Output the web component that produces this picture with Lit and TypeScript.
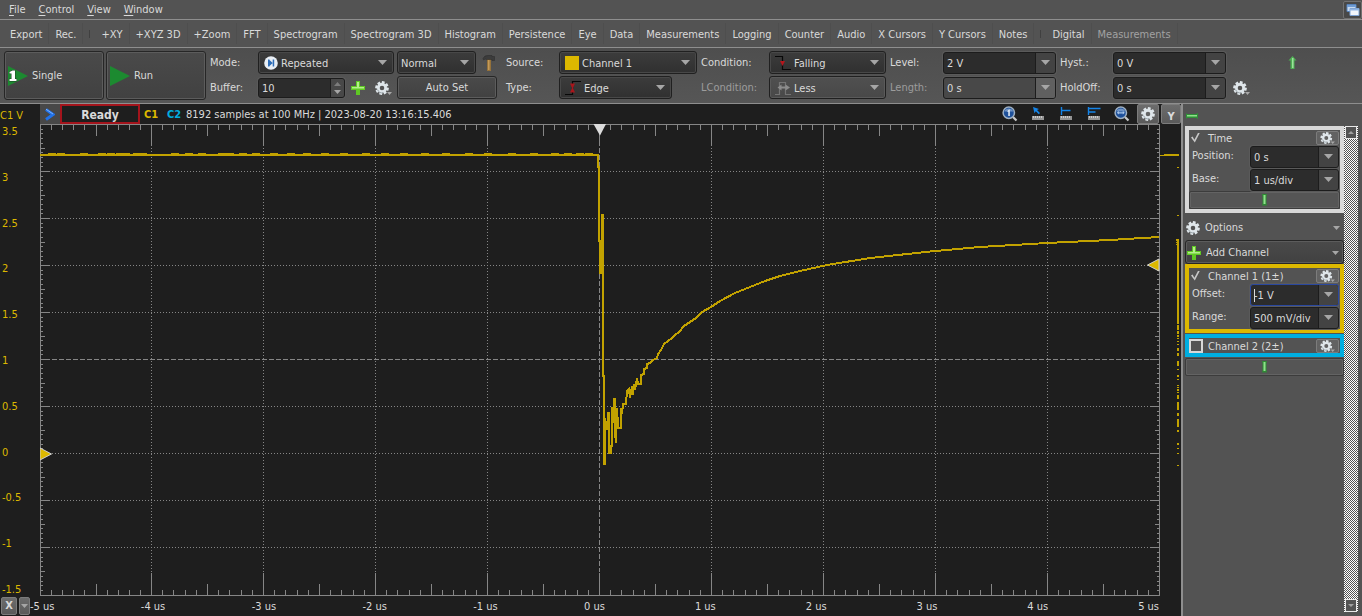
import { LitElement, html, css, svg, nothing, TemplateResult } from "lit";
import { customElement } from "lit/decorators.js";

const gearTeeth = [0, 45, 90, 135, 180, 225, 270, 315];

const gearIcon = (size = 14, drop = false) => html`
  <svg class="icon" width=${drop ? size + 4 : size} height=${size} viewBox="0 0 ${drop ? 18 : 14} 14" aria-hidden="true">
    ${gearTeeth.map((a) => svg`<rect x="5.5" y="0.2" width="3" height="3.6" rx=".4" fill="#dfe6ea" transform="rotate(${a + 12} 7 7)"/>`)}
    <circle cx="7" cy="7" r="3.6" fill="none" stroke="#dfe6ea" stroke-width="2.6"/>
    <path d="M2.6 8.6A4.8 4.8 0 0 0 8.4 11.6" fill="none" stroke="#9aa4aa" stroke-width="1"/>
    ${drop ? svg`<path d="M12 11h5l-2.5 3z" fill="#a8a8a8"/>` : nothing}
  </svg>`;

const plusIcon = html`
  <svg class="icon" width="14" height="14" viewBox="0 0 14 14" aria-hidden="true">
    <path d="M5 0h4v5h5v4h-5v5h-4v-5h-5v-4h5z" fill="#5fc824"/>
    <path d="M6 1h2v5h5v1.400h-12v-1.400h5z" fill="#b4f08a"/>
  </svg>`;

const caret = html`
  <svg class="caret" width="9" height="5" viewBox="0 0 9 5" aria-hidden="true"><path d="M0 0h9l-4.500 5z" fill="#a6a6a6"/></svg>`;

const smallCaret = html`
  <svg class="caret" width="7" height="4" viewBox="0 0 7 4" aria-hidden="true"><path d="M0 0h7l-3.500 4z" fill="#a6a6a6"/></svg>`;

const pinIcon = html`
  <svg class="icon" width="5" height="12" viewBox="0 0 5 12" aria-hidden="true">
    <path d="M0 0h5l-.5 3v6l.5 2.500h-5l.5-2.500v-6z" fill="#2f8a35"/><path d="M1.500 1h2v9h-2z" fill="#8fe08a"/>
  </svg>`;

const playIcon = (one: boolean) => html`
  <svg class="icon" width="20" height="20" viewBox="0 0 20 20" aria-hidden="true">
    <path d="M0 0L20 10L0 20z" fill="#1c8a30"/>
    ${one
      ? svg`<path d="M1.500 7.500v-1.500l3-1.500h2.500v8.500h1.500v2h-7v-2h2v-5.500z" fill="#fff" stroke="#1d3d22" stroke-width="1" paint-order="stroke"/>`
      : nothing}
  </svg>`;

const repeatIcon = html`
  <svg class="icon" width="14" height="14" viewBox="0 0 14 14" aria-hidden="true">
    <circle cx="7" cy="7" r="6.800" fill="#e8eef4"/>
    <path d="M4 3.500h1.500v7h-1.500zM5.500 4l3.200 3-3.200 3zM8.700 3.500h1.500v7h-1.500z" fill="#2d6db8"/>
  </svg>`;

const hammerIcon = html`
  <svg class="icon" width="14" height="16" viewBox="0 0 14 16" aria-hidden="true">
    <path d="M5 4h4v12h-4z" fill="#94713a"/><path d="M6 5h1.500v10h-1.500z" fill="#c49a58"/>
    <path d="M1 3.500Q2.500 0 6 .5h4v1h2.500v4h-2.500v-1h-5Q3 3.500 1.500 5z" fill="#3c3c3c" stroke="#2a2a2a" stroke-width=".5"/>
  </svg>`;

const swatchIcon = html`
  <svg class="icon" width="14" height="14" viewBox="0 0 14 14" aria-hidden="true"><path d="M0 0h14v14h-14z" fill="#dcb800"/></svg>`;

const edgeIcon = html`
  <svg class="icon" width="16" height="16" viewBox="0 0 16 16" aria-hidden="true">
    <path d="M0 14.500h7.500v-13h8.500" fill="none" stroke="#080808" stroke-width="1.200"/>
    <path d="M5 3.500h5l-2 4.500 2 4.500h-5l2-4.500z" fill="#a8161c"/>
  </svg>`;

const fallingIcon = html`
  <svg class="icon" width="16" height="16" viewBox="0 0 16 16" aria-hidden="true">
    <path d="M0 1.500h7.500v13h8.500" fill="none" stroke="#080808" stroke-width="1.200"/>
    <path d="M5 6h5l-2.500 5z" fill="#b4161c"/>
  </svg>`;

const lessIcon = html`
  <svg class="icon" width="16" height="16" viewBox="0 0 16 16" aria-hidden="true">
    <path d="M0 14.500h4.500v-12h6v12h5.500" fill="none" stroke="#747474" stroke-width="1.200"/>
    <path d="M2.500 7.500l4-3v2h4v-2l4.500 3-4.500 3v-2h-4v2z" fill="#8c8c8c"/>
  </svg>`;

const windowsIcon = html`
  <svg class="icon" width="14" height="12" viewBox="0 0 14 12" aria-hidden="true">
    <path d="M1 .5h9v7h-9z" fill="#c8daf0" stroke="#5580b8"/><path d="M1 1h9v2h-9z" fill="#6f9cd4"/>
    <path d="M4 4.500h9v7h-9z" fill="#f2f6fc" stroke="#7fa4d4"/><path d="M4 5h9v1.500h-9z" fill="#8fb4e4"/>
  </svg>`;

const upArrow = html`
  <svg class="icon" width="9" height="13" viewBox="0 0 9 13" aria-hidden="true">
    <path d="M4.500 0L8.500 4.500h-2v8.500h-4v-8.500h-2z" fill="#4fae54"/><path d="M4 2h1.500v10h-1.500z" fill="#9be29a"/>
  </svg>`;

const dockArrow = html`
  <svg class="icon" width="12" height="6" viewBox="0 0 12 6" aria-hidden="true">
    <path d="M0 0l1 1h9l2-1v6l-2-1h-9l-1 1z" fill="#2f8f38"/><path d="M1 2h10v1.500h-10z" fill="#8fe08a"/>
  </svg>`;

const blueChevron = html`
  <svg class="icon" width="10" height="13" viewBox="0 0 10 13" aria-hidden="true">
    <path d="M1 1.500L8 6.500L1 11.500" fill="none" stroke="#2272e8" stroke-width="3"/>
    <path d="M1 1.200L8 6" fill="none" stroke="#7cb4ff" stroke-width="1"/>
  </svg>`;

const lens = (one: boolean) => html`
  <svg class="icon" width="16" height="16" viewBox="0 0 16 16" aria-hidden="true">
    <path d="M11 11l3.500 3.500" stroke="#c8c8c8" stroke-width="2.200"/>
    <circle cx="6.800" cy="6.800" r="5.700" fill="#1e509a" stroke="#9fb0c2" stroke-width="1.500"/>
    <path d="M2.400 5.500a4.800 4.800 0 0 1 8.800 0z" fill="#6f93c4"/>
    ${one
      ? svg`<path d="M5.500 5l1.500-1.500h.8v6.500h-1.500v-4.500l-.8.5z" fill="#e8f0fa"/>`
      : svg`<path d="M2.800 6.800l2-1.800v1.200h4v-1.200l2 1.800-2 1.800v-1.200h-4v1.200z" fill="#a9c6ea"/>`}
  </svg>`;

const ruler = (kind: "cursor" | "single" | "double") => html`
  <svg class="icon" width="16" height="16" viewBox="0 0 16 16" aria-hidden="true">
    <path d="M2 10h12v4h-12z" fill="#949494"/><path d="M3.500 10v2M5.500 10v2M7.500 10v2M9.500 10v2M11.500 10v2" stroke="#d8d8d8" stroke-width=".8"/>
    ${kind === "cursor"
      ? svg`<path d="M3 1l6 2-2 1 3 3-1.200 1.200-3-3-1.300 2z" fill="#1484e8"/>`
      : kind === "single"
        ? svg`<path d="M3.500 1v8M3.500 4.500h9" stroke="#1484e8" stroke-width="1.400" fill="none"/>`
        : svg`<path d="M2.500 1v8M2.500 2.500h12M2.500 6h7" stroke="#1484e8" stroke-width="1.400" fill="none"/>`}
  </svg>`;

/** Tick ladder: short, half and full ticks along an axis between grid lines. */
function tickPath(edges: number[], draw: (pos: number, rank: number) => string): string {
  let d = "";
  for (let i = 0; i < edges.length - 1; i++) {
    for (let k = 0; k < 10; k++) {
      if (i === 0 && k === 0) continue;
      const p = Math.round(edges[i] + ((edges[i + 1] - edges[i]) * k) / 10) + 0.5;
      d += draw(p, k === 0 ? 2 : k === 5 ? 1 : 0);
    }
  }
  return d;
}

const columns = [0, 111, 223, 335, 447, 559, 671, 783, 895, 1007, 1119];
const rows = [0, 47, 94, 141, 188, 235, 282, 329, 376, 423, 471];

const trace: [number, number][] = [
  [0, 31], [558, 31], [558, 43], [559, 43], [559, 117], [560, 117], [560, 149], [562, 149], [562, 91],
  [563, 91], [563, 252], [564, 252], [564, 340], [565, 340], [565, 294], [567, 306], [568, 289], [569, 289],
  [569, 329], [571, 329], [571, 322], [572, 322], [572, 283], [574, 299], [574, 275], [575, 275], [575, 308],
  [576, 319], [577, 284], [578, 302], [578, 304], [581, 304], [581, 284], [582, 290], [583, 280], [586, 280],
  [587, 267], [589, 265], [590, 274], [592, 262], [593, 271], [594, 260], [595, 266], [597, 254], [598, 260],
  [601, 260], [601, 251], [604, 250], [604, 245], [607, 244], [607, 240], [610, 239], [613, 236], [617, 234],
  [618, 230], [621, 226], [624, 220], [628, 217], [632, 214], [635, 211], [639, 208], [644, 202], [650, 198],
  [656, 194], [662, 188], [671, 183], [680, 177], [695, 169], [710, 163], [725, 157], [740, 152], [760, 147],
  [787, 141], [830, 134], [895, 127], [940, 123], [1007, 119], [1070, 116], [1119, 113],
];

const ripples = [8, 17, 40, 58, 67, 76, 82, 93, 99, 131, 145, 158, 178, 186, 199, 212, 230, 247, 263, 281, 300, 322, 341, 360, 381, 402, 425, 444, 468, 490, 511, 524, 536, 545];

@customElement("scope-plot")
export class ScopePlot extends LitElement {
  static styles = css`
    :host { display: block; position: relative; min-width: 0; min-height: 0; }
    .canvas { position: absolute; inset: 0; width: 100%; height: 100%; display: block; }
  `;

  render() {
    const top = tickPath(columns, (x, r) => `M${x} 0v${[6, 12, 22][r]}M${x} 472v${-[6, 12, 23][r]}`);
    const side = tickPath(rows, (y, r) => `M0 ${y}h${[3, 5, 10][r]}M1120 ${y}h${-[3, 5, 10][r]}`);
    return html`
      <svg class="canvas" viewBox="0 0 1120 472" preserveAspectRatio="none" role="img" aria-label="Channel 1 waveform">
        <g fill="none" stroke="#868686" shape-rendering="crispEdges">
          ${columns.slice(1, -1).map((x) => svg`<path d="M${x + 0.5} 24V448" stroke-dasharray=${x === 559 ? "5 2" : "1 2"}/>`)}
          ${rows.slice(1, -1).map((y) => svg`<path d="M12 ${y + 0.5}H1110" stroke-dasharray=${y === 235 ? "5 2" : "1 2"}/>`)}
          <path d="M.5 .5H1119.5V471.5H.5z"/>
          <path d=${top}/>
          <path d=${side}/>
        </g>
        <polyline points=${trace.map((p) => p.join(",")).join(" ")} fill="none" stroke="#c2a200" stroke-width="2" shape-rendering="crispEdges"/>
        <path d=${ripples.map((x) => `M${x} 29.5h8`).join("")} stroke="#c2a200" shape-rendering="crispEdges"/>
        <path d="M553.500 0h12.500l-6 11.500z" fill="#dcdcdc"/>
        <path d="M0 324l11.500 6-11.500 6z" fill="#dcb800" stroke="#cfcfcf"/>
        <path d="M1119 135l-11.500 6 11.500 6z" fill="#dcb800" stroke="#cfcfcf"/>
      </svg>`;
  }
}

@customElement("scope-overview")
export class ScopeOverview extends LitElement {
  static styles = css`
    :host { display: block; position: relative; min-width: 0; }
    .canvas { position: absolute; inset: 0; width: 100%; height: 100%; display: block; }
  `;

  render() {
    const dashes: [number, number][] = [
      [43, 1], [91, 1], [115, 76], [191, 9], [201, 5], [207, 3], [211, 2], [214, 1], [217, 1], [220, 1], [224, 3],
      [229, 3], [237, 5], [245, 1], [251, 2], [255, 1], [261, 1], [263, 1], [265, 2], [268, 1], [271, 4], [278, 8],
      [289, 3], [295, 8], [306, 2], [319, 2], [324, 1], [329, 1], [341, 1],
    ];
    return html`
      <svg class="canvas" viewBox="0 0 21 472" preserveAspectRatio="none" aria-hidden="true">
        <g fill="#c2a200" shape-rendering="crispEdges">
          <path d="M0 31h19v1h-19zM4 30h15v1h-15z"/>
          <path d="M16 115h1v2h-1zM16 118h1v1h-1zM16 120h1v1h-1z"/>
          ${dashes.map(([y, h]) => svg`<rect x="17" y=${y} width="2" height=${h}/>`)}
        </g>
      </svg>`;
  }
}

@customElement("app-root")
export class AppRoot extends LitElement {
  static styles = css`
    :host {
      display: flex; flex-direction: column; height: 100vh; overflow: hidden;
      background: #535353; color: #dadada;
      font: 11px/14px "DejaVu Sans Condensed", Tahoma, "DejaVu Sans", sans-serif;
    }
    * { box-sizing: border-box; }
    button, input, select { font: inherit; color: inherit; margin: 0; padding: 0; border: 0; background: none; outline: none; border-radius: 0; }
    select { appearance: none; opacity: 1; }
    select:disabled, input:disabled { color: #dadada; opacity: 1; }
    .icon, .caret { display: block; flex: none; }

    .menubar { display: flex; align-items: center; height: 20px; border-bottom: 1px solid #8e8e8e; flex: none; padding: 0 0 0 5px; }
    .menu { padding: 0 4px; margin-right: 5px; }
    .menu u { text-underline-offset: 2px; }
    .windows { margin-left: auto; width: 19px; height: 18px; display: grid; place-items: center; border: 1px solid #717171; border-radius: 2px; background: #484848; }

    .views { display: flex; align-items: center; height: 28px; border-bottom: 1px solid #8e8e8e; flex: none; padding: 0 4px; }
    .view { height: 21px; padding: 2px 6px 0; border-right: 1px solid #4e4e4e; white-space: nowrap; }
    .view:disabled { color: #a2a2a2; }
    .rule { width: 1px; height: 8px; margin: 0 5px 0 6px; background: #404040; }

    .controls { display: flex; height: 56px; border-bottom: 1px solid #8e8e8e; flex: none; padding: 3px 4px; background: linear-gradient(#4e4e4e, #565656); }
    .big { width: 100px; height: 49px; margin-right: 2px; display: flex; align-items: center; gap: 4px; padding-left: 3px; }
    .raised { border: 1px solid #262626; border-radius: 3px; background: linear-gradient(#4a4a4a, #414141); box-shadow: inset 0 0 0 1px #5c5c5c; }
    .group { display: grid; grid-template: 23px 23px / auto 1fr; row-gap: 2px; align-items: center; margin-left: 4px; }
    .first { margin-left: 2px; }
    .second { margin-left: 9px; }
    .label { width: 53px; padding-top: 1px; }
    .narrow { width: 48px; padding-top: 1px; }
    .wide { width: 68px; padding-top: 1px; }
    .off { color: #9c9c9c; }
    .cells { display: flex; align-items: center; }

    .combo { display: flex; align-items: center; height: 23px; width: 113px; padding: 0 6px 0 5px; border: 1px solid #202020; border-radius: 3px; background: linear-gradient(#3c3c3c, #303030); box-shadow: inset 0 0 0 1px #484848; }
    .combo select { flex: 1; min-width: 0; height: 21px; padding: 2px 0 0 3px; }
    .mode { width: 136px; }
    .normal { width: 79px; margin: 0 6px 0 3px; padding-left: 0; }
    .source { width: 138px; }
    .condition { width: 117px; }
    .dim { background: linear-gradient(#505050, #484848); box-shadow: inset 0 0 0 1px #5a5a5a; }

    .entry { display: flex; height: 22px; width: 113px; border: 1px solid #1c1c1c; border-radius: 3px; background: #2c2c2c; box-shadow: 0 0 0 1px #5a5a5a; overflow: hidden; }
    .entry input { flex: 1; min-width: 0; padding: 2px 0 0 3px; }
    .entry .drop { width: 20px; display: grid; place-items: center; border-left: 1px solid #1c1c1c; background: #434343; flex: none; }
    .entry.dim { background: #484848; }
    .entry.dim .drop { background: #606060; }
    .focus { border-color: #2a48a0; }
    .focus input { background: linear-gradient(#dadada, #dadada) 3px 4px / 1px 13px no-repeat; }
    .spin { width: 87px; margin-right: 6px; height: 20px; }
    .spin .steps { width: 14px; display: grid; place-items: center; align-content: center; gap: 4px; border-left: 1px solid #1c1c1c; background: #484848; }
    .plain { display: grid; place-items: center; width: 14px; height: 20px; }
    .gear { width: 18px; margin: 0 4px 0 10px; }
    .auto { width: 100px; height: 23px; padding-top: 1px; }
    .hold { align-self: flex-end; margin: 0 0 2px 7px; width: 18px; }
    .upper { margin: 1px 0 0 37px; width: 9px; }

    .main { flex: 1; min-height: 0; display: flex; }
    .scope { flex: 1; min-width: 0; display: grid; grid-template: 20px 1fr 20px / 40px 1fr 21px; background: #1e1e1e; }
    .unit { color: #dcb800; line-height: 24px; }
    .bar { grid-column: 2 / 4; display: flex; align-items: center; white-space: nowrap; line-height: 24px; }
    .expand { width: 20px; height: 20px; display: grid; place-items: center; background: #484848; }
    .ready { width: 80px; height: 20px; border: 2px solid #a4141c; text-align: center; font-weight: bold; font-size: 12px; line-height: 18px; }
    .tag { font-weight: bold; margin-left: 4px; width: 19px; padding-top: 2px; }
    .sample { padding-top: 2px; }
    .c1 { color: #dcb800; }
    .c2 { color: #00aee0; }
    .tools { margin-left: auto; display: flex; align-items: center; gap: 12px; }
    .tool { display: grid; place-items: center; height: 20px; width: 16px; }
    .key { display: grid; place-items: center; border: 1px solid #7c7c7c; border-radius: 2px; background: linear-gradient(#6c6c6c, #5a5a5a); font-weight: bold; height: 20px; }
    .setup { width: 22px; margin: 0 2px 0 7px; }
    .ykey { width: 20px; }
    .ylabels { display: flex; flex-direction: column; justify-content: space-between; padding: 1px 0 0 2px; margin-bottom: -1px; color: #dcb800; }
    .foot { grid-column: 1 / 4; display: flex; padding: 1px 22px 0 1px; }
    .xkey { width: 16px; height: 18px; margin-right: 2px; }
    .xdrop { width: 11px; height: 18px; }
    .xlabels { flex: 1; display: grid; grid-template-columns: repeat(10, 1fr) auto; line-height: 20px; white-space: nowrap; }

    .dock { width: 181px; flex: none; border-left: 2px solid #8e8e8e; padding: 0 4px 0 2px; display: flex; flex-direction: column; min-height: 0; }
    .head { height: 22px; display: flex; align-items: center; padding: 2px 0 0 1px; flex: none; }
    .body { flex: 1; min-height: 0; display: flex; }
    .list { flex: 1; min-width: 0; display: flex; flex-direction: column; }
    .box { border: 4px solid #d8d8d8; margin-bottom: 1px; }
    .box.one { border-color: #dcb800; }
    .box.two { border-color: #00aee0; }
    .title { display: flex; align-items: center; height: 15px; gap: 5px; padding-right: 1px; }
    .title label { flex: 1; padding-top: 3px; }
    .title input { appearance: none; width: 14px; height: 14px; flex: none; border: 2px solid #d8d8d8; }
    .title input:checked { border: 0; width: 10px; height: 10px; margin: 0 2px; background: #c8c8c8; clip-path: polygon(0 50%, 16% 40%, 34% 72%, 72% 0, 90% 0, 38% 100%); }
    .mini { width: 23px; height: 14px; display: grid; place-items: center; border: 1px solid #7c7c7c; border-radius: 2px; background: #626262; }
    .field { display: flex; align-items: center; height: 23px; padding: 0 1px 0 3px; }
    .field label { width: 58px; padding-bottom: 1px; }
    .field .entry { flex: 1; }
    .strip { display: grid; place-items: center; width: 100%; height: 18px; border: 1px solid #3c3c3c; border-radius: 2px; background: #555; box-shadow: inset 0 0 0 1px #636363; }
    .row { display: flex; align-items: center; gap: 5px; height: 24px; padding: 2px 4px 0 1px; text-align: left; }
    .row .caret { margin-left: auto; }
    .options { margin: 1px 0; }
    .scroll { width: 14px; flex: none; display: flex; flex-direction: column; margin-bottom: 4px; background: repeating-conic-gradient(#fff 0 25%, #535353 0 50%) 0 0 / 2px 2px; }
    .scroll button { height: 13px; margin: 0 1px; display: grid; place-items: center; border: 1px solid #e8e8e8; background: #535353; flex: none; }
    .track { flex: 1; }
  `;

  private combo(id: string, value: string, cls = "", icon?: TemplateResult, disabled = false) {
    return html`<span class="combo ${cls}">${icon ?? nothing}<select id=${id} aria-label=${value} ?disabled=${disabled}><option>${value}</option></select>${caret}</span>`;
  }

  private entry(id: string, value: string, cls = "", disabled = false) {
    return html`<span class="entry ${cls}"><input id=${id} type="text" .value=${value} ?disabled=${disabled}><button class="drop" aria-label="Choose value" ?disabled=${disabled}>${caret}</button></span>`;
  }

  private view(name: string, disabled = false) {
    return html`<button class="view" ?disabled=${disabled}>${name}</button>`;
  }

  render() {
    return html`
      <nav class="menubar">
        <button class="menu"><u>F</u>ile</button><button class="menu"><u>C</u>ontrol</button><button class="menu"><u>V</u>iew</button><button class="menu"><u>W</u>indow</button>
        <button class="windows" aria-label="Windows">${windowsIcon}</button>
      </nav>
      <div class="views">
        ${["Export", "Rec."].map((n) => this.view(n))}
        <span class="rule"></span>
        ${["+XY", "+XYZ 3D", "+Zoom", "FFT", "Spectrogram", "Spectrogram 3D", "Histogram", "Persistence", "Eye", "Data", "Measurements", "Logging", "Counter", "Audio", "X Cursors", "Y Cursors", "Notes"].map((n) => this.view(n))}
        <span class="rule"></span>
        ${this.view("Digital")}${this.view("Measurements", true)}
      </div>
      <div class="controls">
        <button class="big raised">${playIcon(true)}Single</button>
        <button class="big raised">${playIcon(false)}Run</button>
        <div class="group first">
          <label class="narrow" for="mode">Mode:</label>
          <div class="cells">${this.combo("mode", "Repeated", "mode", repeatIcon)}${this.combo("run-mode", "Normal", "normal")}${hammerIcon}</div>
          <label class="narrow" for="buffer">Buffer:</label>
          <div class="cells">
            <span class="entry spin"><input id="buffer" type="text" .value=${"10"}><span class="steps">
              <svg class="icon" width="7" height="4" viewBox="0 0 7 4"><path d="M0 4h7l-3.500-4z" fill="#7c7c7c"/></svg>${smallCaret}</span></span>
            <button class="plain" aria-label="Add buffer">${plusIcon}</button>
            <button class="plain gear" aria-label="Buffer options">${gearIcon(14, true)}</button>
            <button class="auto raised">Auto Set</button>
          </div>
        </div>
        <div class="group second">
          <label class="label" for="source">Source:</label>${this.combo("source", "Channel 1", "source", swatchIcon)}
          <label class="label" for="type">Type:</label>${this.combo("type", "Edge", "", edgeIcon)}
        </div>
        <div class="group">
          <label class="wide" for="condition">Condition:</label>${this.combo("condition", "Falling", "condition", fallingIcon)}
          <label class="wide off" for="lcondition">LCondition:</label>${this.combo("lcondition", "Less", "condition dim", lessIcon, true)}
        </div>
        <div class="group">
          <label class="label" for="level">Level:</label>${this.entry("level", "2 V")}
          <label class="label off" for="length">Length:</label>${this.entry("length", "0 s", "dim", true)}
        </div>
        <div class="group">
          <label class="label" for="hyst">Hyst.:</label>${this.entry("hyst", "0 V")}
          <label class="label" for="holdoff">HoldOff:</label>${this.entry("holdoff", "0 s")}
        </div>
        <button class="plain hold" aria-label="Trigger options">${gearIcon(14, true)}</button>
        <button class="plain upper" aria-label="Collapse">${upArrow}</button>
      </div>
      <div class="main">
        <section class="scope">
          <div class="unit">C1 V</div>
          <div class="bar">
            <button class="expand" aria-label="Expand">${blueChevron}</button>
            <div class="ready">Ready</div>
            <span class="tag c1">C1</span><span class="tag c2">C2</span>
            <span class="sample">8192 samples at 100 MHz | 2023-08-20 13:16:15.406</span>
            <div class="tools">
              <button class="tool" aria-label="Zoom 1">${lens(true)}</button>
              <button class="tool" aria-label="Cursor">${ruler("cursor")}</button>
              <button class="tool" aria-label="Ruler">${ruler("single")}</button>
              <button class="tool" aria-label="Double ruler">${ruler("double")}</button>
              <button class="tool" aria-label="Zoom fit">${lens(false)}</button>
            </div>
            <button class="key setup" aria-label="Plot options">${gearIcon(14)}</button>
            <button class="key ykey">Y</button>
          </div>
          <div class="ylabels">${["3.5", "3", "2.5", "2", "1.5", "1", "0.5", "0", "-0.5", "-1", "-1.5"].map((t) => html`<span>${t}</span>`)}</div>
          <scope-plot></scope-plot>
          <scope-overview></scope-overview>
          <div class="foot">
            <button class="key xkey">X</button><button class="key xdrop" aria-label="X axis menu">${smallCaret}</button>
            <div class="xlabels">${[-5, -4, -3, -2, -1, 0, 1, 2, 3, 4, 5].map((t) => html`<span>${t} us</span>`)}</div>
          </div>
        </section>
        <aside class="dock">
          <div class="head">${dockArrow}</div>
          <div class="body">
            <div class="list">
              <div class="box">
                <div class="title"><input id="time" type="checkbox" checked><label for="time">Time</label><button class="mini" aria-label="Time options">${gearIcon(12, true)}</button></div>
                <div class="field"><label for="position">Position:</label>${this.entry("position", "0 s")}</div>
                <div class="field"><label for="base">Base:</label>${this.entry("base", "1 us/div")}</div>
                <button class="strip" aria-label="More time settings">${pinIcon}</button>
              </div>
              <button class="row options">${gearIcon(14)}Options${smallCaret}</button>
              <button class="row raised">${plusIcon}Add Channel${smallCaret}</button>
              <div class="box one">
                <div class="title"><input id="ch1" type="checkbox" checked><label for="ch1">Channel 1 (1±)</label><button class="mini" aria-label="Channel 1 options">${gearIcon(12, true)}</button></div>
                <div class="field"><label for="offset">Offset:</label>${this.entry("offset", "-1 V", "focus")}</div>
                <div class="field"><label for="range">Range:</label>${this.entry("range", "500 mV/div")}</div>
              </div>
              <div class="box two">
                <div class="title"><input id="ch2" type="checkbox"><label for="ch2">Channel 2 (2±)</label><button class="mini" aria-label="Channel 2 options">${gearIcon(12, true)}</button></div>
              </div>
              <button class="strip" aria-label="More channels">${pinIcon}</button>
            </div>
            <div class="scroll">
              <button aria-label="Scroll up"><svg class="icon" width="6" height="3" viewBox="0 0 6 3"><path d="M0 3h6l-3-3z" fill="#a0a0a0"/></svg></button>
              <div class="track"></div>
              <button aria-label="Scroll down"><svg class="icon" width="6" height="3" viewBox="0 0 6 3"><path d="M0 0h6l-3 3z" fill="#a0a0a0"/></svg></button>
            </div>
          </div>
        </aside>
      </div>`;
  }
}
